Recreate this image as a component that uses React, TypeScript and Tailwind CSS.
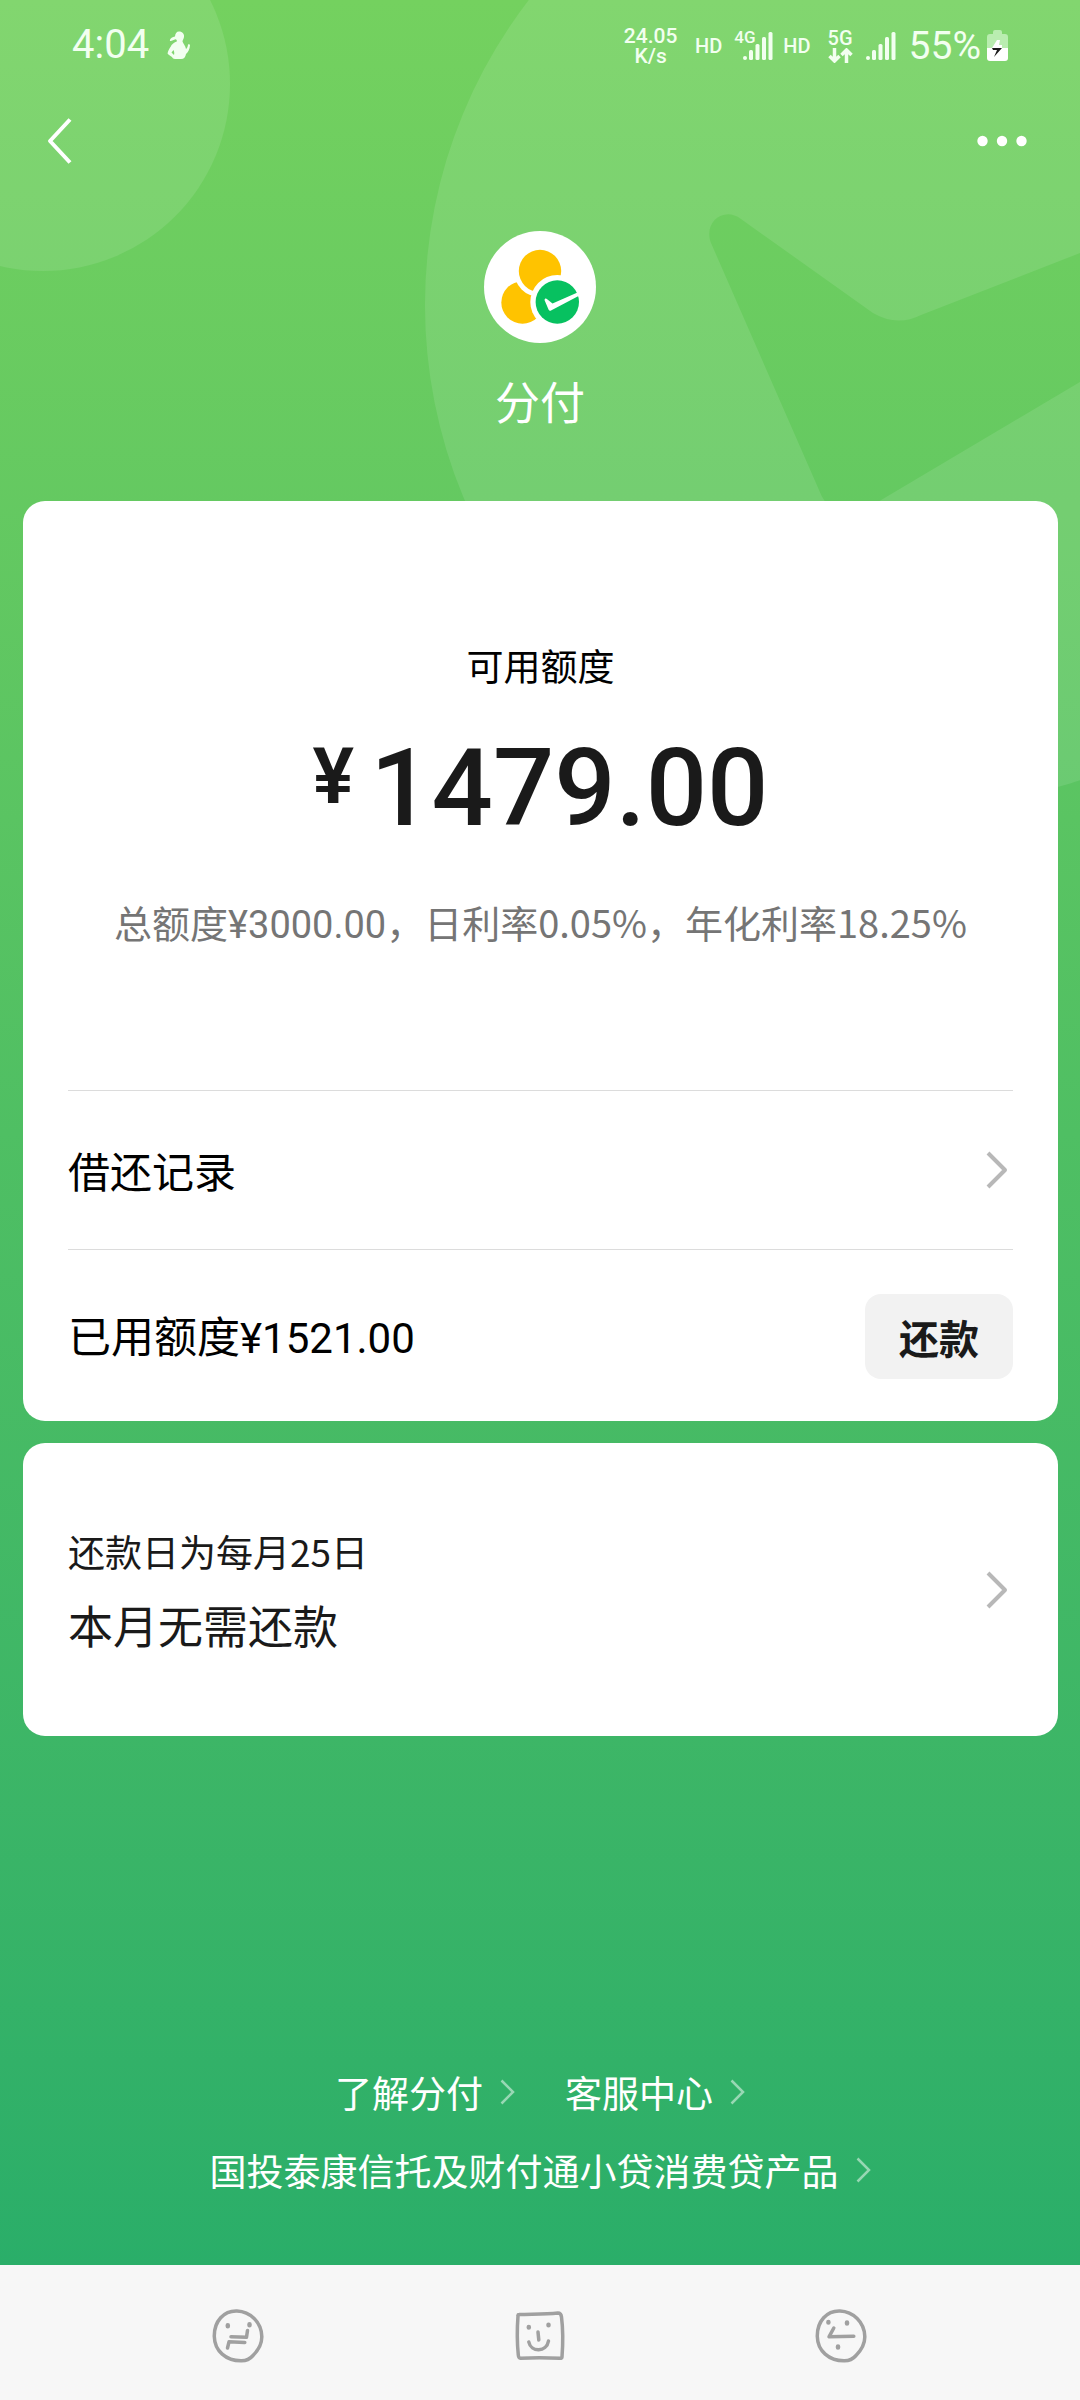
import type { ReactNode } from 'react';

const Backdrop = () => (
  <svg
    viewBox="0 0 1080 820"
    className="absolute top-0 left-0 w-full fill-white/10"
    aria-hidden="true"
  >
    <circle cx="43" cy="84" r="187" />
    <path
      fillRule="evenodd"
      d="M425 305a500 500 0 1 0 1000 0a500 500 0 1 0 -1000 0Z M711 243L819 490Q824 504 836 512H861L1080 382V253L921 315Q897 327 873 313L741 219C724 206 703 222 711 243Z"
    />
  </svg>
);

const SignalBars = () => (
  <svg width="30" height="29" viewBox="0 0 30 29" fill="currentColor">
    <rect x="0" y="24" width="4" height="4" rx="2" />
    <rect x="6" y="18" width="4" height="10" rx="1.5" />
    <rect x="12.500" y="12" width="4" height="16" rx="1.5" />
    <rect x="19" y="5" width="4" height="23" rx="1.5" />
    <rect x="25.500" y="0" width="4" height="28" rx="1.5" />
  </svg>
);

const StatusBar = () => (
  <div className="flex h-[88px] items-center justify-between px-[72px] text-[#f2fff0] font-['Roboto','Liberation_Sans',sans-serif]">
    <div className="flex items-center gap-[18px] pt-[2px]">
      <span className="text-[40px] leading-none">4:04</span>
      <svg width="24" height="28" viewBox="0 0 24 28" fill="currentColor">
        <path d="M12 0.500C15.500 0.500 17.500 3 17 6C16.800 8 15.500 9 15.500 10.500C16 12.500 18.500 14.500 19 18C20.200 17.500 20.800 15.500 21 13.800C21.200 13 23 13.200 23 14.300C22.800 18 21 21.500 19 23C18.500 26 17 28 14 28H8C6.500 28 5.500 27 5 26C3.500 25 2 24.300 0.700 22.800C0.300 22 2 18 3.500 16C4.500 13 7.500 11.500 9.800 10.500C10 9 9.500 8.500 8.500 8.200C6.500 8.500 5 10.300 3 10C2.500 8 5 6 8 5.500C8.200 2.500 9.500 0.500 12 0.500ZM6.500 19L4.500 21.500L7 24C7.500 22.500 7.300 20.500 6.500 19Z" />
      </svg>
    </div>
    <div className="flex items-center pt-[4px] font-medium">
      <div className="flex w-[55px] flex-col items-center text-[21px] leading-[20px]">
        <span>24.05</span>
        <span>K/s</span>
      </div>
      <span className="ml-[17px] text-[20px] leading-none">HD</span>
      <div className="ml-[12px] flex h-[34px] w-[39px] flex-col items-end">
        <span className="h-[3px] self-start text-[17px] leading-[17px]">4G</span>
        <SignalBars />
      </div>
      <span className="ml-[10px] text-[20px] leading-none">HD</span>
      <div className="ml-[17px] flex flex-col items-center">
        <span className="text-[20px] leading-[19px]">5G</span>
        <svg width="25" height="15" viewBox="0 0 25 15" fill="none" stroke="currentColor" strokeWidth="3.500">
          <path d="M6.500 0V13M1.500 8L6.500 13L11.500 8M18.500 15V2M13.500 7L18.500 2L23.500 7" />
        </svg>
      </div>
      <div className="ml-[13px]">
        <SignalBars />
      </div>
      <span className="ml-[13px] text-[39px] leading-none font-normal">55%</span>
      <svg className="ml-[6px]" width="21" height="32" viewBox="0 0 21 32">
        <path d="M6 2Q6 0 8 0H13Q15 0 15 2V4H18Q21 4 21 7V18H0V7Q0 4 3 4H6Z" fill="#b9edb0" />
        <path d="M0 18H21V28Q21 31 18 31H3Q0 31 0 28Z" fill="#ffffff" />
        <path d="M10 10L13 10L12 15H15V18H5Z" fill="#ffffff" />
        <path d="M5 18H15L7 27L10 20H6Z" fill="#1c1c1c" />
      </svg>
    </div>
  </div>
);

const NavBar = () => (
  <div className="flex h-[105px] items-center justify-between pl-[47px] pr-[53px] text-white">
    <button type="button" aria-label="返回">
      <svg width="26" height="46" viewBox="0 0 26 46" fill="none" stroke="currentColor" strokeWidth="4" strokeLinejoin="round">
        <path d="M23 1.500L3 23L23 44.500" />
      </svg>
    </button>
    <button type="button" aria-label="更多">
      <svg width="50" height="12" viewBox="0 0 50 12" fill="currentColor">
        <circle cx="5.500" cy="6" r="5.200" />
        <circle cx="25" cy="6" r="5.200" />
        <circle cx="44.500" cy="6" r="5.200" />
      </svg>
    </button>
  </div>
);

const Logo = () => (
  <svg width="112" height="112" viewBox="0 0 112 112">
    <circle cx="56" cy="56" r="56" fill="#ffffff" />
    <circle cx="38.500" cy="71.500" r="21.200" fill="#ffc300" />
    <circle cx="56" cy="40" r="26" fill="#ffffff" />
    <circle cx="56" cy="40" r="21.200" fill="#ffc300" />
    <circle cx="73.300" cy="71" r="27" fill="#ffffff" />
    <circle cx="73.300" cy="71" r="21.700" fill="#07c160" />
    <path d="M60.500 69Q61 66.500 63.500 68.500L68.500 72.500L93.500 61.500L95.500 64.500L67 79.500Q65.500 80.500 64.500 78.500Z" fill="#ffffff" />
  </svg>
);

const Chevron = () => (
  <svg className="mr-[5px] shrink-0 text-[#b8b8b8]" width="22" height="38" viewBox="0 0 22 38" fill="none" stroke="currentColor" strokeWidth="4" strokeLinejoin="round">
    <path d="M2 2L19 19L2 36" />
  </svg>
);

const FooterLink = ({ children }: { children: ReactNode }) => (
  <a href="#" className="flex items-center gap-[17px]">
    {children}
    <svg className="text-white/50" width="15" height="26" viewBox="0 0 15 26" fill="none" stroke="currentColor" strokeWidth="2.500">
      <path d="M1.500 1.500L13 13L1.500 24.500" />
    </svg>
  </a>
);

const faceProps = {
  width: 53,
  height: 54,
  viewBox: '0 0 53 54',
  fill: 'none',
  stroke: 'currentColor',
  strokeWidth: 3.5,
  strokeLinecap: 'round',
  strokeLinejoin: 'round',
} as const;

const faceOutline =
  'M25 2C12 1.500 2 12 2.300 27.500C2.600 42 14 52 29.500 51.800C35 51.800 38 50 41 46.500C46.500 41 50 35 49.800 27.500C49.500 13 38 2.500 25 2Z';

const SystemNav = () => (
  <nav className="grid h-[135px] grid-cols-3 place-items-center bg-[#f7f7f7] px-[88px] pt-[7px] text-[#a0a0a0]">
    <button type="button" aria-label="最近任务">
      <svg {...faceProps}>
        <path d={faceOutline} />
        <path d="M15.800 16.200V17.200M37.500 15.200V16.200" strokeWidth="4.500" />
        <path d="M19 27.700L34.500 28.300L35.500 21.500M32.800 33.500L17 32.800L15.500 39" />
      </svg>
    </button>
    <button type="button" aria-label="主屏幕">
      <svg {...faceProps}>
        <path d="M6 5.500C20 5 32 5.300 45 4Q48 4 48.500 8C50 20 50 35 49 48Q49 49.500 47 49.300C34 48.600 20 48.600 7.500 49.200Q5.500 49 5.300 46C4 33 4 20 5 7Q5 5.500 6 5.500Z" />
        <path d="M15.800 18V18.500M35.500 15.800V16.300" strokeWidth="4.500" />
        <path d="M25 23L25.800 31M15.800 33C18 43.500 33.500 43.500 35.500 32" />
      </svg>
    </button>
    <button type="button" aria-label="返回上一页">
      <svg {...faceProps}>
        <path d={faceOutline} />
        <path d="M13.400 13V13.500M32 13.500V14.500M23 37.500V38.500" strokeWidth="4.500" />
        <path d="M18.800 19L14 27.800L38.800 27.300" />
      </svg>
    </button>
  </nav>
);

export default function App() {
  return (
    <div
      lang="zh-CN"
      className="flex min-h-screen flex-col font-['Noto_Sans_CJK_SC',sans-serif] text-[#1a1a1a]"
    >
      <div className="relative flex flex-1 flex-col bg-linear-to-b from-[#74d15f] via-[#4fbf63] to-[#2aae69]">
        <Backdrop />
        <div className="relative flex flex-1 flex-col">
          <StatusBar />
          <NavBar />

          <header className="flex flex-col items-center pt-[38px] pb-[68px] text-white">
            <Logo />
            <h1 className="mt-[26px] text-[45px] leading-[64px]">分付</h1>
          </header>

          <main className="flex flex-col gap-[22px] pr-[22px] pl-[23px]">
            <section className="rounded-[22px] bg-white px-[45px]">
              <div className="flex flex-col items-center pt-[137px] pb-[138px]">
                <p className="text-[37px] leading-[54px] text-black">可用额度</p>
                <p className="mt-[40px] flex items-start gap-[16px] font-['Roboto','Liberation_Sans',sans-serif]">
                  <span className="text-[78px] leading-[90px] font-semibold">¥</span>
                  <span className="text-[108px] leading-[112px] font-medium">1479.00</span>
                </p>
                <p className="mt-[51px] text-[38px] leading-[54px] whitespace-nowrap text-[#757575]">
                  总额度<span className="font-['Roboto',sans-serif]">¥3000.00</span>，日利率0.05%，年化利率18.25%
                </p>
              </div>
              <a href="#" className="flex items-center justify-between border-t border-[#dcdcdc] py-[48px] text-[42px] leading-[62px] text-black">
                借还记录
                <Chevron />
              </a>
              <div className="flex items-center justify-between border-t border-[#dcdcdc] pt-[44px] pb-[42px] text-black">
                <p className="text-[43px] leading-[62px]">
                  已用额度<span className="font-['Roboto',sans-serif] text-[42px]">¥1521.00</span>
                </p>
                <button type="button" className="h-[85px] rounded-[16px] bg-[#f2f2f2] px-[34px] text-[40px] leading-[58px] font-bold text-[#1a1a1a]">
                  还款
                </button>
              </div>
            </section>

            <a href="#" className="flex items-center justify-between rounded-[22px] bg-white px-[45px] pt-[78px] pb-[77px]">
              <div>
                <p className="text-[37px] leading-[60px]">还款日为每月25日</p>
                <p className="mt-[10px] text-[45px] leading-[68px]">本月无需还款</p>
              </div>
              <Chevron />
            </a>
          </main>

          <footer className="mt-auto flex flex-col items-center gap-[24px] pb-[68px] text-[37px] leading-[54px] text-white">
            <div className="flex gap-[50px]">
              <FooterLink>了解分付</FooterLink>
              <FooterLink>客服中心</FooterLink>
            </div>
            <FooterLink>国投泰康信托及财付通小贷消费贷产品</FooterLink>
          </footer>
        </div>
      </div>
      <SystemNav />
    </div>
  );
}
